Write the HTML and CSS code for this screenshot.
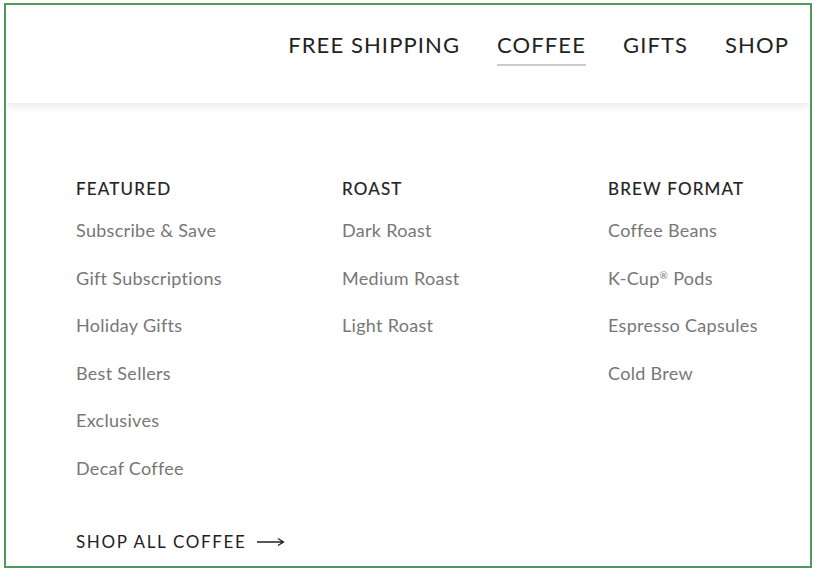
FILE: index.html
```html
<!DOCTYPE html>
<html lang="en">
<head>
<meta charset="utf-8">
<title>Coffee menu</title>
<link rel="stylesheet" href="styles.css">
</head>
<body>
<div class="frame">
  <header class="header">
    <nav class="nav">
      <a class="nav-item" href="#">FREE SHIPPING</a>
      <a class="nav-item active" href="#">COFFEE</a>
      <a class="nav-item" href="#">GIFTS</a>
      <a class="nav-item" href="#">SHOP</a>
    </nav>
  </header>
  <main class="menu">
    <div class="columns">
      <section class="col">
        <h2 class="col-title">FEATURED</h2>
        <ul class="links">
          <li><a href="#">Subscribe &amp; Save</a></li>
          <li><a href="#">Gift Subscriptions</a></li>
          <li><a href="#">Holiday Gifts</a></li>
          <li><a href="#">Best Sellers</a></li>
          <li><a href="#">Exclusives</a></li>
          <li><a href="#">Decaf Coffee</a></li>
        </ul>
      </section>
      <section class="col">
        <h2 class="col-title">ROAST</h2>
        <ul class="links">
          <li><a href="#">Dark Roast</a></li>
          <li><a href="#">Medium Roast</a></li>
          <li><a href="#">Light Roast</a></li>
        </ul>
      </section>
      <section class="col">
        <h2 class="col-title">BREW FORMAT</h2>
        <ul class="links">
          <li><a href="#">Coffee Beans</a></li>
          <li><a href="#">K-Cup<sup class="reg">®</sup> Pods</a></li>
          <li><a href="#">Espresso Capsules</a></li>
          <li><a href="#">Cold Brew</a></li>
        </ul>
      </section>
    </div>
    <a class="shop-all" href="#">SHOP ALL COFFEE
      <svg class="arrow" width="28" height="10" viewBox="0 0 28 10"><path d="M0 5H26M21 1.5L26.5 5L21 8.5" fill="none" stroke="#222" stroke-width="1.3"/></svg>
    </a>
  </main>
</div>
</body>
</html>
```
FILE: styles.css
```css
html, body {
  margin: 0;
  padding: 0;
  background: #fff;
}
body {
  padding: 3px 0 0 4px;
  font-family: Lato, "Open Sans", sans-serif;
}
.frame {
  box-sizing: border-box;
  width: 808px;
  height: 565px;
  border: 2px solid #4e9a5b;
  background: #fff;
  overflow: hidden;
  display: flex;
  flex-direction: column;
}
.header {
  height: 98px;
  flex: none;
  display: flex;
  justify-content: flex-end;
  box-shadow: 0 3px 8px rgba(0,0,0,0.09);
  position: relative;
  z-index: 1;
}
.nav {
  display: flex;
  gap: 37px;
  padding: 27px 21px 0 0;
}
.nav-item {
  color: #222;
  text-decoration: none;
  font-size: 22px;
  letter-spacing: 1.1px;
  line-height: 26px;
  height: 34px;
  box-sizing: border-box;
}
.nav-item.active {
  border-bottom: 2px solid #ccc;
}
.menu {
  padding: 76px 0 0 70px;
  flex: 1;
}
.columns {
  display: grid;
  grid-template-columns: 266px 266px 1fr;
  height: 353px;
}
.col-title {
  margin: 0 0 21px;
  font-size: 17px;
  font-weight: 400;
  letter-spacing: 1.2px;
  color: #222;
  line-height: 20px;
  -webkit-text-stroke: 0.2px #222;
}
.links {
  list-style: none;
  margin: 0;
  padding: 0;
  display: flex;
  flex-direction: column;
  gap: 27.6px;
}
.links li {
  font-size: 18px;
  line-height: 20px;
  height: 20px;
}
.links a {
  color: #777;
  text-decoration: none;
  letter-spacing: 0.3px;
}
.reg {
  font-size: 10px;
  vertical-align: 6px;
  line-height: 0;
}
.shop-all {
  display: inline-flex;
  align-items: center;
  gap: 11px;
  color: #222;
  text-decoration: none;
  font-size: 17px;
  letter-spacing: 1.65px;
  line-height: 20px;
}
.arrow {
  display: block;
}
```
